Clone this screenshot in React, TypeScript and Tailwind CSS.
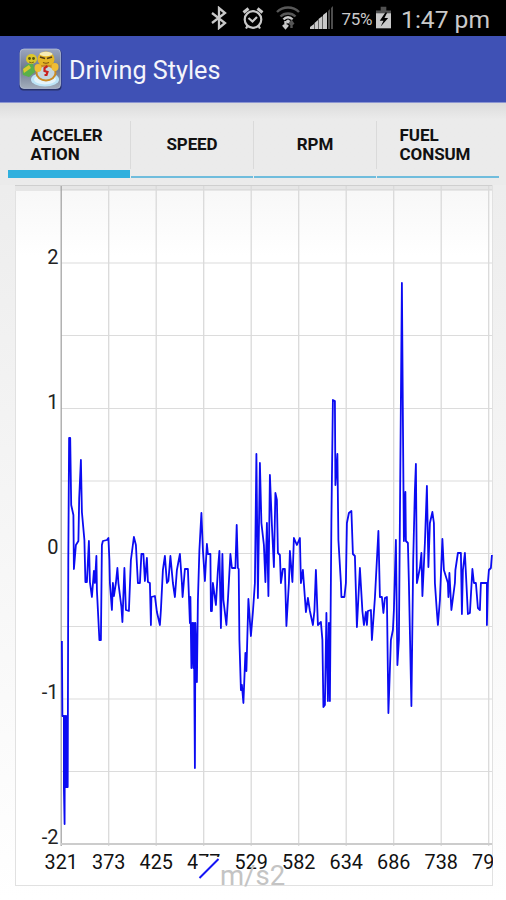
import clsx from 'clsx';

const tabs = [
    { id: 'acceleration', lines: ['ACCELER', 'ATION'] },
    { id: 'speed', lines: ['SPEED'] },
    { id: 'rpm', lines: ['RPM'] },
    { id: 'fuel', lines: ['FUEL', 'CONSUM'] },
];

const xLabels = ['321', '373', '425', '477', '529', '582', '634', '686', '738', '790'];
const yLabels = ['2', '1', '0', '-1', '-2'];

// Plot area inside the 478x701 chart panel
const ORIGIN_X = 46.2;
const STEP_X = 47.5;
const gridRows = [4, 77.5, 150, 223, 295.5, 368, 441, 513.5, 586];

const samples =
    '62,641 62.5,716 64,716 64,788 64.7,824 65,716 65.5,787 66,716 66.7,787 67.3,716 67.8,787 68.4,560 69.2,438 70.3,438 71.3,505 73.5,515 74,569 76,545 78.5,541 79.3,498 81,460 82,512 84.5,540 85.5,582 87,582 89,541 90,582 92,597 94,571 95,583 96.5,556 97,590 99.5,640 101,640 102,545 103,541 107,540 108.5,538 109.5,560 110,583 112,610 113,583 114,596 116,583 117.5,568 118.5,583 121.5,607 122.5,622 124.5,568 126,610 129,611 131,560 134,537 136,545 138,583 140,583 141.5,554 143.5,554 145,581 147,558 148,582 150,583 151,625 151.5,597 155,596 157,612 160,625 161,610 163,570 165,556 167,583 168.5,581 170.5,556 173,583 175,597 177,570 180,554 182,583 182.7,597 185,569 188,569 190,623 190.5,597 191.5,668 192.5,623 193.5,668 194,623 195,768 195.5,623 197,682 198,600 199.5,550 201.5,513 203,550 205,581 207,544 208,554 210.5,554 211,611 212,611 213,583 216,605 218,570 219.5,551 221,628 222.5,554 223.5,600 226.5,625 228,600 230.5,554 232,568 235.5,568 236.8,525 238,568 238.8,569 239.5,640 241,690 242,685 243.5,703 245.5,653 246.5,671 248.5,599 251,636 253,612 255,583 256.5,454 258,598 260,463 261.5,523 264,545 265.5,582 267,523 268.5,596 270,475 272,525 274,567 275.5,493 277,500 278,553 280,555 281,583 283,569 285,569 286.5,626 289,583 290,551 292.5,582 294,538 297,545 300,538 301,583 303,570 306,612 308,598 310,611 313,625 314.5,611 316,570 318,625 321,622 322.5,640 323.5,707 325,705 326.5,613 328,701 329,623 330,701 331.5,520 333,400 335,401 335.5,485 337.5,454 338.5,540 341,583 341.5,597 344.5,597 346,583 347,523 349,513 351.5,511 353,554 355,556 357,627 360,568 362.5,611 364,625 366,612 367,625 368,611 371,610 372,640 375,598 378.5,531 380,597 382,597 383.5,613 385,598 387,597 388.5,713 391,640 393,630 394,610 396,540 397.5,665 399,640 401,400 402,283 403,420 404,541 405.5,492 406,541 408,543 409,583 411.5,706 413.3,560 415,490 416,464 417,583 420,568 421.5,553 422.5,596 425,543 427,486 428.5,567 430,523 432.5,512 434,523 435,583 437,612 438,625 440,600 442.5,539 444,570 448,583 448.5,597 449.5,573 451.5,610 455,583 455.5,570 458,553 461,553 462,614 463,570 465,553 468,614 470,613 472.5,569 474,583 476,583 478,608 480,610 481,583 487,583 487,625 488,583 489,570 491,568 492,555';

function StatusBar() {
    return (
        <div className="flex h-[36px] items-center justify-end bg-black pr-[16px] text-[#c9c9c9]">
            <svg className="mr-[14px] h-6 w-[18px]" viewBox="0 0 18 24" fill="none" stroke="currentColor" strokeWidth="2.3">
                <path d="M2 7l13 10-6 5V2l6 5L2 17" />
            </svg>
            <svg className="mr-[12px] h-6 w-[22px]" viewBox="0 0 22 24" fill="none" stroke="currentColor" strokeWidth="2.2">
                <circle cx="11" cy="13.5" r="8.3" />
                <path d="M6.500 12l4 3.500 4.500-4.500M5.500 20L4 22.500M16.500 20l1.500 2.500" />
                <path d="M1.500 6.500l5-4M20.500 6.500l-5-4" strokeWidth="3" />
            </svg>
            <svg className="mr-[10px] h-6 w-6" viewBox="0 0 24 24" fill="none" strokeWidth="2.4">
                <path d="M1 6c6-6 16-6 22 0M4.500 10.500c4-4 11-4 15 0" stroke="#585858" />
                <path d="M7.500 13.500c2.500-3 6.500-3 9 0" stroke="#c9c9c9" />
                <circle cx="12" cy="15.5" r="2" fill="#c9c9c9" />
                <path d="M9.500 15v7M7 19l2.500 3 2.500-3" stroke="#c9c9c9" />
                <path d="M15.500 22v-6M13.500 18.500l2-3 2 3" stroke="#555" />
            </svg>
            <svg className="mr-[7px] h-6 w-6" viewBox="0 0 24 24" fill="currentColor">
                <path d="M0 23v-2l4-3v5zM4.500 23v-6l3.500-3v9zM8.500 23V13l4-3v13zM13 23V9l4-3v17z" />
                <path d="M18 23V5l2-2v20zM21 23V2l2-2v23z" fill="#4d4d4d" />
            </svg>
            <span className="mr-[4px] pt-[2px] text-[17px] leading-6 tracking-[-0.3px]">75%</span>
            <svg className="mr-[10px] h-6 w-[15px]" viewBox="0 0 16 24">
                <path d="M5 0h6v4h5v6H0V4h5z" fill="#505050" />
                <path d="M0 7h16v16H0z" fill="#c9c9c9" />
                <path d="M10 6l-6 9h4l-3 6 8-9H9l3-6z" fill="#000" />
            </svg>
            <span className="pt-[4px] text-[24.6px] leading-6">1:47 pm</span>
        </div>
    );
}

function AppIcon() {
    return (
        <svg className="h-[43px] w-[43px]" viewBox="0 0 43 43">
            <defs>
                <linearGradient id="tile" x1="0" y1="0" x2="0" y2="1">
                    <stop offset="0" stopColor="#9ba6bf" />
                    <stop offset="0.5" stopColor="#6d7890" />
                    <stop offset="1" stopColor="#a3adbb" />
                </linearGradient>
            </defs>
            <rect x="0.500" y="1.500" width="42" height="41" rx="4" fill="#28326b" />
            <rect x="1" y="1" width="40.500" height="39.500" rx="4" fill="url(#tile)" stroke="#bbc5dd" strokeWidth="0.700" />

            {/* passenger */}
            <path d="M9 16c-5 3-6 8-5 11l6 2 6-5-2-8z" fill="#59b04a" />
            <path d="M4 21l6-4 2 3-7 5z" fill="#d8c831" />
            <ellipse cx="12.500" cy="11" rx="5.500" ry="5" fill="#dcc62a" />
            <circle cx="10.500" cy="10.500" r="1.400" fill="#54520f" />
            <circle cx="14.500" cy="10.500" r="1.400" fill="#54520f" />
            <path d="M10 14q2.500 1.500 5 0" stroke="#806912" fill="none" />

            {/* driver and steering wheel */}
            <ellipse cx="26" cy="31.500" rx="14" ry="7" fill="#bde4f7" />
            <ellipse cx="26" cy="31.500" rx="11" ry="5" fill="#e4f3fa" />
            <ellipse cx="28" cy="18" rx="9" ry="5" fill="#d79a1c" />
            <ellipse cx="27" cy="11" rx="8.500" ry="7.500" fill="#e5b726" />
            <ellipse cx="27" cy="6" rx="6.500" ry="2.200" fill="#f6ecb5" />
            <path d="M21 9l5 1.500M28 10.500l5-1.500" stroke="#523c17" strokeWidth="1.800" fill="none" />
            <path d="M24 14.500q3 1.500 6 0" stroke="#7d5412" strokeWidth="1.200" fill="none" />
            <ellipse cx="27" cy="25" rx="9.500" ry="7.500" fill="#c5d6df" stroke="#c98a25" strokeWidth="2" />
            <path d="M28.500 18l-3 2v3l3 1-1 3h-2" fill="none" stroke="#c8201d" strokeWidth="2.200" />
            <ellipse cx="19" cy="20" rx="3.500" ry="4" fill="#efbd35" />
            <ellipse cx="36" cy="19" rx="3.500" ry="4" fill="#efbd35" />
        </svg>
    );
}

function AccelerationChart() {
    return (
        <svg className="block h-[702px] w-[478px]" viewBox="0 0 478 702">
            <defs>
                <linearGradient id="panel" x1="0" y1="0" x2="0" y2="1">
                    <stop offset="0" stopColor="#f7f7f7" />
                    <stop offset="0.1" stopColor="#ffffff" />
                </linearGradient>
            </defs>
            <rect x="0.5" y="0.5" width="477" height="700" fill="url(#panel)" stroke="#e1e1e1" />
            <rect x="0" y="0" width="477" height="6" fill="#e6e6e6" />
            <path d="M0 0.5H477" stroke="#cfcfcf" />

            {gridRows.map((y) => (
                <path key={y} d={`M46 ${y + 0.5}H477`} stroke="#dcdcdc" strokeWidth="1.2" />
            ))}
            {xLabels.map((label, i) => (
                <path
                    key={label}
                    d={`M${ORIGIN_X + i * STEP_X} 1V661`}
                    stroke={i === 0 ? '#a5a5a5' : '#dadada'}
                    strokeWidth="1.3"
                />
            ))}
            <path d="M46 659H477" stroke="#cccccc" strokeWidth="2" />

            <polyline
                points={samples}
                transform="translate(-15.1 -185)"
                fill="none"
                stroke="#0b0bf2"
                strokeWidth="1.8"
                strokeLinejoin="round"
            />

            <g fontSize="20" fill="#222" textAnchor="end">
                {yLabels.map((label, i) => (
                    <text key={label} x="43.5" y={78.5 + i * 145.1}>{label}</text>
                ))}
            </g>
            <g fontSize="19.8" fill="#111" textAnchor="middle">
                {xLabels.map((label, i) => (
                    <text key={label} x={ORIGIN_X + i * STEP_X} y="684">{label}</text>
                ))}
            </g>

            {/* legend */}
            <rect x="183" y="672" width="22" height="22" fill="#fff" />
            <path d="M184.500 693L203.500 674" stroke="#1515f5" strokeWidth="2" />
            <text x="205" y="700" fontSize="27.5" fill="#c4c4c4">m/s2</text>
        </svg>
    );
}

export default function App() {
    const active = 'acceleration';

    return (
        <div className="flex h-[900px] w-[506px] flex-col overflow-hidden bg-linear-to-b from-[#e8e8e8] via-[#f4f4f4] to-white font-['Roboto',sans-serif]">
            <StatusBar />
            <header className="flex h-[67px] items-center gap-[7px] border-b border-[#8c96d2] bg-[#3f51b5] pl-[19px]">
                <AppIcon />
                <h1 className="pt-[4px] text-[25.2px] text-[#f4f5fb]">Driving Styles</h1>
            </header>

            <nav className="flex h-[82px] gap-px bg-linear-to-b from-[#dcdcdc] to-[#ebebeb] to-20% px-[8px] pt-[7px] pb-[7px]">
                {tabs.map((tab, i) => (
                    <button
                        key={tab.id}
                        className={clsx(
                            'relative flex w-[122px] shrink-0 items-center justify-center text-[17px] leading-[19px] font-bold tracking-[-0.1px] text-[#111]',
                            tab.id === active ? 'border-b-8 border-[#30b0de] pt-[9px] pr-[5px]' : 'border-b-2 border-[#70bddd] pt-[3px]',
                            i === 3 && 'pr-[6px]',
                        )}
                    >
                        {i > 0 && <span className="absolute top-[11px] -left-px h-[48px] w-px bg-[#dadada]" />}
                        <span className="text-left">
                            {tab.lines.map((line) => (
                                <span key={line} className="block">{line}</span>
                            ))}
                        </span>
                    </button>
                ))}
            </nav>

            <main className="pl-[15px]">
                <AccelerationChart />
            </main>
        </div>
    );
}
